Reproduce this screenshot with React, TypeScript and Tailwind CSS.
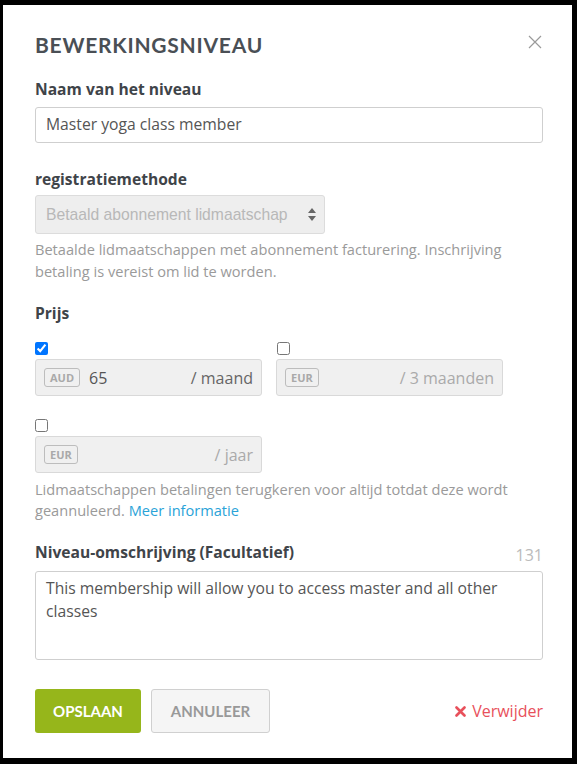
import React from 'react';

const body = { fontFamily: '"Open Sans", "Liberation Sans", sans-serif' };
const heading = { fontFamily: 'Lato, "Open Sans", sans-serif' };

function Badge({ code }: { code: string }) {
  return (
    <span className="flex h-[19px] items-center rounded-[3px] border border-[#bdbdbd] px-[5px] text-[11px] font-bold leading-none text-[#a9a9a9]">
      {code}
    </span>
  );
}

function PriceField({
  code,
  value,
  period,
  active,
}: {
  code: string;
  value?: string;
  period: string;
  active?: boolean;
}) {
  return (
    <div className="flex h-[37px] w-[227px] items-center rounded-[3px] border border-[#d9d9d9] bg-[#f0f0f0] pl-[8px] pr-[8px]">
      <Badge code={code} />
      <span className="ml-[9px] flex-1 text-[16px] text-[#555]">{value}</span>
      <span className={`text-[16px] ${active ? 'text-[#666]' : 'text-[#aaa]'}`}>{period}</span>
    </div>
  );
}

function Check({ checked }: { checked?: boolean }) {
  return (
    <input
      type="checkbox"
      defaultChecked={checked}
      className="m-0 block h-[13px] w-[13px]"
    />
  );
}

export default function App() {
  return (
    <div className="h-[764px] w-[577px] bg-black pl-[3px] pt-[5px]" style={body}>
      <div className="h-[753px] w-[569px] bg-white pl-[32px] pr-[29px] pt-[26px]">
        <div className="flex items-center justify-between">
          <h2
            className="text-[21px] font-bold uppercase leading-[28px] tracking-[0.75px] text-[#4a4f55]"
            style={heading}
          >
            Bewerkingsniveau
          </h2>
          <svg width="14" height="14" viewBox="0 0 14 14" className="mr-[1px] mt-[-6px]">
            <path d="M1 1 L13 13 M13 1 L1 13" stroke="#9a9a9a" strokeWidth="1.2" fill="none" />
          </svg>
        </div>

        <label className="mt-[20px] block text-[15.6px] font-bold leading-[20px] text-[#3f4449]">
          Naam van het niveau
        </label>
        <div className="mt-[8px] flex h-[36px] items-center rounded-[3px] border border-[#cfcfcf] px-[10px] text-[15.7px] text-[#555]">
          Master yoga class member
        </div>

        <label className="mt-[26px] block text-[15.6px] font-bold leading-[20px] text-[#3f4449]">
          registratiemethode
        </label>
        <div className="mt-[6px] flex h-[39px] w-[290px] items-center justify-between rounded-[3px] border border-[#dcdcdc] bg-[#eeeeee] pl-[10px] pr-[8px]">
          <span className="text-[15.7px] text-[#b8b8b8]" style={{ fontFamily: '"Liberation Sans", Arial, sans-serif' }}>
            Betaald abonnement lidmaatschap
          </span>
          <svg width="8" height="13" viewBox="0 0 8 13">
            <path d="M4 0 L8 5 L0 5 Z M0 8 L8 8 L4 13 Z" fill="#666" />
          </svg>
        </div>
        <p className="mt-[4px] text-[14.6px] leading-[22px] text-[#9a9a9a]">
          Betaalde lidmaatschappen met abonnement facturering. Inschrijving betaling is vereist om lid te worden.
        </p>

        <label className="mt-[21px] block text-[15.6px] font-bold leading-[20px] text-[#3f4449]">Prijs</label>
        <div className="mt-[19px] flex gap-[14px]">
          <div>
            <Check checked />
            <div className="mt-[4px]">
              <PriceField code="AUD" value="65" period="/ maand" active />
            </div>
          </div>
          <div>
            <div className="ml-[1px]">
              <Check />
            </div>
            <div className="mt-[4px]">
              <PriceField code="EUR" period="/ 3 maanden" />
            </div>
          </div>
        </div>
        <div className="mt-[23px]">
          <Check />
          <div className="mt-[4px]">
            <PriceField code="EUR" period="/ jaar" />
          </div>
        </div>
        <p className="mt-[6px] text-[14.6px] leading-[21px] text-[#9a9a9a]">
          Lidmaatschappen betalingen terugkeren voor altijd totdat deze wordt geannuleerd.{' '}
          <a className="text-[#2aa3d8]">Meer informatie</a>
        </p>

        <div className="mt-[21px] flex items-end justify-between">
          <label className="block text-[15.6px] font-bold leading-[20px] text-[#3f4449]">
            Niveau-omschrijving (Facultatief)
          </label>
          <span className="translate-y-[3px] text-[16px] leading-[20px] text-[#bbbbbb]">131</span>
        </div>
        <div className="mt-[9px] h-[89px] rounded-[3px] border border-[#cfcfcf] px-[10px] py-[5px] text-[15.7px] leading-[23px] text-[#555]">
          This membership will allow you to access master and all other classes
        </div>

        <div className="mt-[29px] flex items-center">
          <button
            className="h-[44px] w-[106px] rounded-[3px] bg-[#96b61b] text-[15px] font-bold uppercase text-white"
            style={heading}
          >
            Opslaan
          </button>
          <button
            className="ml-[10px] h-[44px] w-[119px] rounded-[3px] border border-[#d0d0d0] bg-[#f5f5f5] text-[15px] font-bold uppercase text-[#999]"
            style={heading}
          >
            Annuleer
          </button>
          <span className="ml-auto flex items-center gap-[6px] text-[16px] text-[#e8505b]">
            <svg width="11" height="11" viewBox="0 0 11 11">
              <path d="M1.5 1.5 L9.5 9.5 M9.5 1.5 L1.5 9.5" stroke="#e8505b" strokeWidth="2.6" strokeLinecap="round" />
            </svg>
            Verwijder
          </span>
        </div>
      </div>
    </div>
  );
}
